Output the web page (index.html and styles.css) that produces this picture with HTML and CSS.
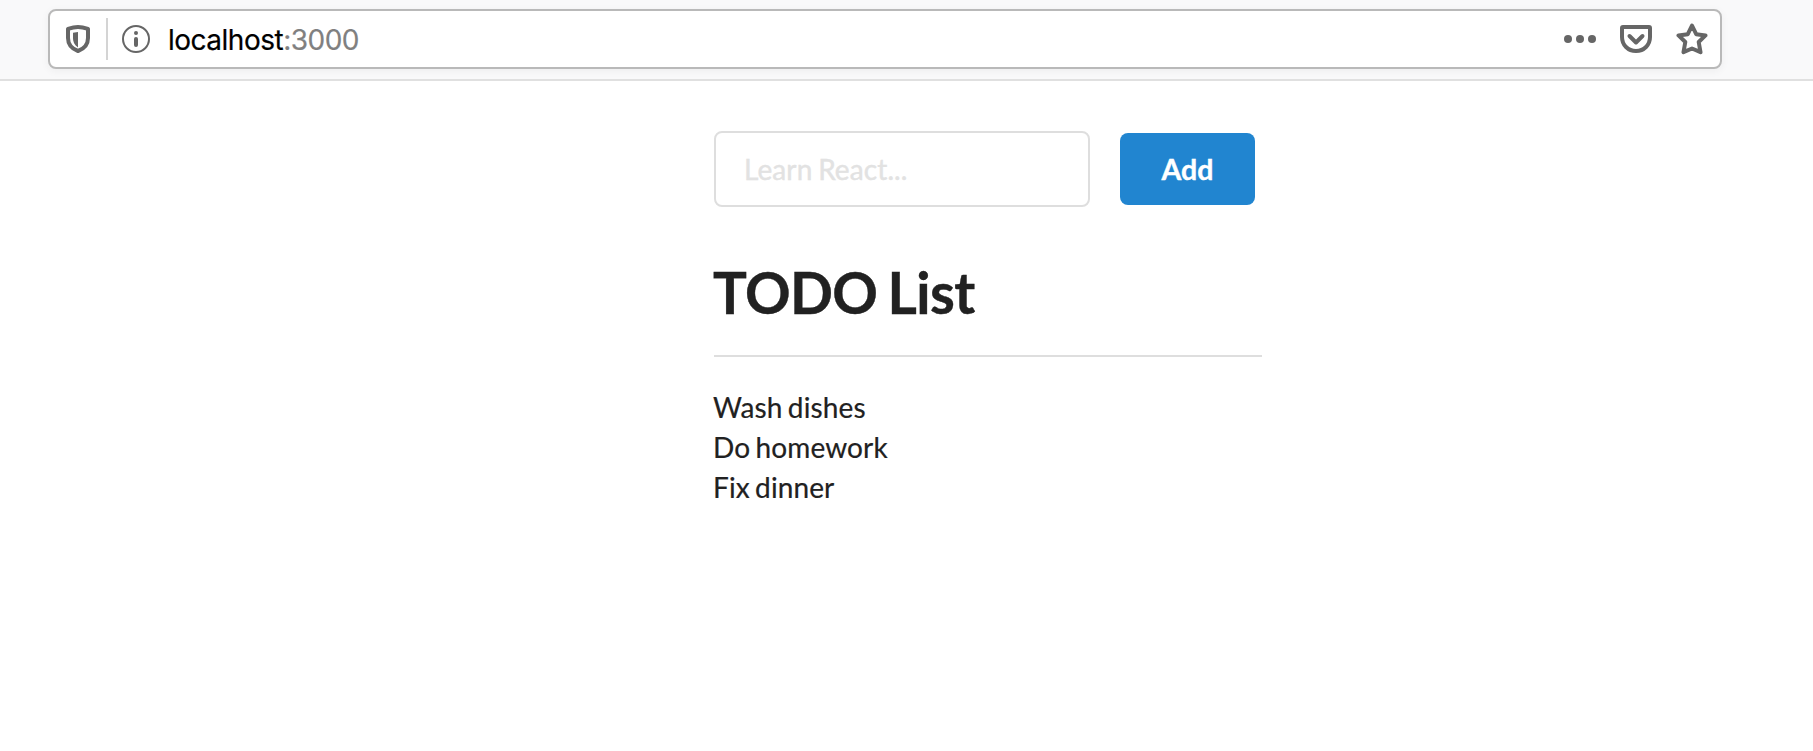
FILE: index.html
```html
<!DOCTYPE html>
<html lang="en">
<head>
<meta charset="utf-8">
<title>TODO List</title>
<link rel="stylesheet" href="styles.css">
</head>
<body>
<header class="toolbar">
  <div class="urlbar">
    <svg class="shield" width="24" height="28" viewBox="0 0 24 28"><path d="M12 2C8.500 2 5.500 2.700 2 3.800V13C2 19 5.200 23.500 12 26C18.800 23.500 22 19 22 13V3.800C18.500 2.700 15.500 2 12 2Z" fill="none" stroke="#666" stroke-width="4" stroke-linejoin="round"/><path d="M12 7V22.500C8.300 20 7 17 7 13V7.800Z" fill="#666"/></svg>
    <span class="separator"></span>
    <svg class="info" width="28" height="28" viewBox="0 0 28 28"><circle cx="14" cy="14" r="13" fill="none" stroke="#666" stroke-width="2"/><circle cx="14" cy="8" r="2" fill="#666"/><path d="M14 14V20" stroke="#666" stroke-width="4" stroke-linecap="round"/></svg>
    <span class="address">localhost<span class="port">:3000</span></span>
    <svg class="dots" width="32" height="8" viewBox="0 0 32 8" fill="#666"><circle cx="4" cy="4" r="4"/><circle cx="16" cy="4" r="4"/><circle cx="28" cy="4" r="4"/></svg>
    <svg class="pocket" width="32" height="28" viewBox="0 0 32 28" fill="none" stroke="#666" stroke-width="4" stroke-linejoin="round" stroke-linecap="round"><path d="M3 2H29Q30 2 30 3V12C30 20 24 26 16 26S2 20 2 12V3Q2 2 3 2Z"/><path d="M9.500 11L16 17.500L22.500 11"/></svg>
    <svg class="star" width="32" height="32" viewBox="0 0 32 32"><path d="M16 2.500L20.200 11.200L29.500 12.400L22.700 19L24.500 29.200L16 25.500L7.500 29.200L9.300 19L2.500 12.400L11.800 11.200Z" fill="none" stroke="#666" stroke-width="4" stroke-linejoin="round"/></svg>
  </div>
</header>
<main class="app">
  <form class="todo-form">
    <input class="todo-input" type="text" placeholder="Learn React...">
    <button class="add-button" type="button">Add</button>
  </form>
  <h1 class="title">TODO List</h1>
  <div class="divider"></div>
  <div class="list">
    <div>Wash dishes</div>
    <div>Do homework</div>
    <div>Fix dinner</div>
  </div>
</main>
</body>
</html>
```
FILE: styles.css
```css
* { box-sizing: border-box; }
body { margin: 0; background: #fff; color: #212121; font: 28px/40px Lato, sans-serif; }
svg { display: block; flex: none; }
.toolbar { height: 81px; padding: 9px 91px 0 48px; background: #f9f9fa; border-bottom: 2px solid #e0e0e0; }
.urlbar { display: flex; align-items: center; height: 60px; padding: 0 12px 0 16px; background: #fff; border: 2px solid #b9b9b9; border-radius: 8px; box-shadow: 0 2px 8px rgba(0, 0, 0, .05); }
.separator { width: 2px; height: 42px; margin: 0 14px 0 16px; background: #d4d4d4; }
.address { flex: 1; margin-left: 18px; padding-top: 2px; color: #000; font-family: Inter, sans-serif; font-size: 28px; letter-spacing: -.5px; -webkit-text-stroke: .2px; }
.port { color: #808080; }
.pocket { margin-left: 24px; }
.star { margin-left: 24px; }
.app { width: 548px; margin: 50px 0 0 714px; }
.todo-form { display: flex; align-items: center; gap: 30px; }
.todo-input { width: 376px; height: 76px; padding: 0 28px; border: 2px solid #dedede; border-radius: 8px; outline: 0; color: #212121; font: 28px Lato, sans-serif; }
.todo-input::placeholder { color: #e2e2e2; opacity: 1; word-spacing: -1.5px; letter-spacing: .1px; -webkit-text-stroke: .4px; }
.add-button { width: 135px; height: 72px; padding: 0; border: 0; border-radius: 8px; background: #2185d0; color: #fff; font: bold 28.5px Lato, sans-serif; -webkit-text-stroke: .4px; }
.title { margin: 49px 0 0 -1px; font-size: 56.5px; line-height: 72px; font-weight: bold; letter-spacing: -.6px; word-spacing: -3px; -webkit-text-stroke: .4px; }
.divider { height: 2px; margin: 27px 0 30px; background: #dedede; }
.list { margin-left: -1px; word-spacing: -2px; letter-spacing: .12px; -webkit-text-stroke: .2px; }
```
